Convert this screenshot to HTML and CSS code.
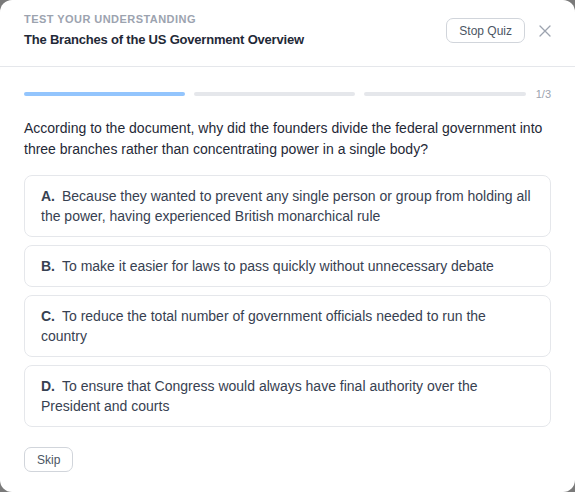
FILE: index.html
```html
<!DOCTYPE html>
<html>
<head>
<meta charset="utf-8">
<link rel="stylesheet" href="styles.css">
</head>
<body>
<div class="modal">
  <header class="header">
    <div class="heading">
      <div class="eyebrow">TEST YOUR UNDERSTANDING</div>
      <div class="title">The Branches of the US Government Overview</div>
    </div>
    <div class="actions">
      <button class="btn">Stop Quiz</button>
      <button class="close" aria-label="Close">
        <svg width="12" height="12" viewBox="0 0 12 12"><path d="M1 1L11 11M11 1L1 11" stroke="#9ca3af" stroke-width="1.3" fill="none" stroke-linecap="round"/></svg>
      </button>
    </div>
  </header>
  <main class="body">
    <div class="progress">
      <div class="seg active"></div>
      <div class="seg"></div>
      <div class="seg"></div>
      <span class="count">1/3</span>
    </div>
    <p class="question">According to the document, why did the founders divide the federal government into three branches rather than concentrating power in a single body?</p>
    <div class="options">
      <div class="option"><span class="letter">A.</span>Because they wanted to prevent any single person or group from holding all the power, having experienced British monarchical rule</div>
      <div class="option"><span class="letter">B.</span>To make it easier for laws to pass quickly without unnecessary debate</div>
      <div class="option"><span class="letter">C.</span>To reduce the total number of government officials needed to run the country</div>
      <div class="option"><span class="letter">D.</span>To ensure that Congress would always have final authority over the President and courts</div>
    </div>
    <button class="btn skip">Skip</button>
  </main>
</div>
</body>
</html>
```

FILE: styles.css
```css
* { box-sizing: border-box; }
html, body { margin: 0; padding: 0; height: 100%; }
body {
  background: #7a7a7a;
  font-family: "Liberation Sans", Arial, sans-serif;
}
.modal {
  background: #fff;
  height: 492px;
  border-radius: 12px;
  overflow: hidden;
}
.header {
  height: 67px;
  border-bottom: 1px solid #e5e7eb;
  display: flex;
  align-items: flex-start;
  justify-content: space-between;
  padding: 12px 24px 0 24px;
}
.eyebrow {
  font-size: 11px;
  font-weight: bold;
  letter-spacing: 0.45px;
  color: #9ca3af;
  line-height: 14px;
}
.title {
  font-size: 13px;
  font-weight: bold;
  letter-spacing: -0.2px;
  color: #1f2937;
  margin-top: 6px;
  line-height: 16px;
}
.actions {
  display: flex;
  align-items: center;
  gap: 14px;
  margin-top: 6px;
}
.btn {
  font-family: inherit;
  font-size: 12px;
  color: #4b5563;
  background: #fff;
  border: 1px solid #d1d5db;
  border-radius: 7px;
  height: 25px;
  padding: 0 12px;
  cursor: pointer;
}
.close {
  background: none;
  border: 0;
  padding: 0;
  width: 12px;
  height: 12px;
  display: flex;
}
.body {
  padding: 21px 24px 0 24px;
}
.progress {
  display: flex;
  align-items: center;
  gap: 9px;
}
.seg {
  flex: 1;
  height: 4px;
  border-radius: 2px;
  background: #e5e7eb;
}
.seg.active { background: #93c5fd; }
.count {
  font-size: 11px;
  color: #9ca3af;
  margin-left: 1px;
}
.question {
  margin: 18px 0 15px 0;
  font-size: 14px;
  line-height: 21px;
  color: #1f2937;
}
.options {
  display: flex;
  flex-direction: column;
  gap: 8px;
}
.option {
  border: 1px solid #e5e7eb;
  border-radius: 8px;
  padding: 10px 16px;
  font-size: 14px;
  line-height: 20px;
  color: #374151;
}
.letter {
  font-weight: bold;
  margin-right: 7px;
}
.skip {
  margin-top: 20px;
  padding: 0 12px;
}
```
